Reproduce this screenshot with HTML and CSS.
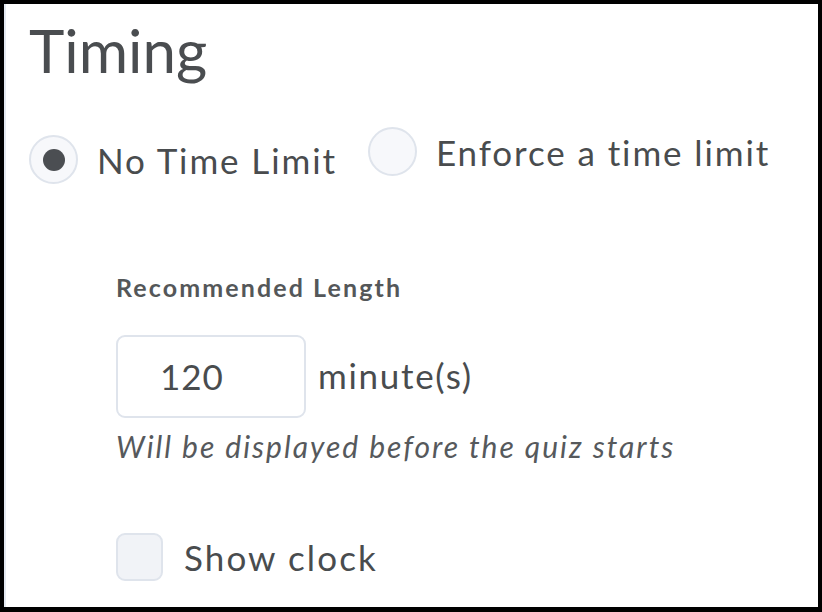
FILE: index.html
```html
<!DOCTYPE html>
<html lang="en">
<head>
<meta charset="utf-8">
<title>Timing</title>
<link rel="stylesheet" href="styles.css">
</head>
<body>
<div class="frame">
  <div class="panel">
    <h1 class="title">Timing</h1>
    <div class="radios">
      <label class="radio-item radio-item--low">
        <span class="radio radio--checked"><span class="dot"></span></span>
        <span class="radio-text">No Time Limit</span>
      </label>
      <label class="radio-item">
        <span class="radio"></span>
        <span class="radio-text">Enforce a time limit</span>
      </label>
    </div>
    <div class="section">
      <div class="field-label">Recommended Length</div>
      <div class="input-row">
        <div class="input">120</div>
        <span class="unit">minute(s)</span>
      </div>
      <div class="help">Will be displayed before the quiz starts</div>
      <label class="check-row">
        <span class="checkbox"></span>
        <span class="check-text">Show clock</span>
      </label>
    </div>
  </div>
</div>
</body>
</html>
```

FILE: styles.css
```css
html, body {
  margin: 0;
  padding: 0;
  background: #000;
  width: 822px;
  height: 612px;
  overflow: hidden;
}

.frame {
  box-sizing: border-box;
  width: 822px;
  height: 612px;
  padding: 4px 4px 5px 4px;
}

.panel {
  box-sizing: border-box;
  height: 100%;
  background: #fff;
  border-left: 2px solid #e4e9f1;
  padding: 10px 0 0 23px;
  font-family: Lato, "Open Sans", sans-serif;
  color: #494c4e;
}

.title {
  margin: 0;
  font-size: 60px;
  line-height: 72px;
  font-weight: 400;
  color: #4a4d50;
}

.radios {
  display: flex;
  align-items: flex-start;
  margin-top: 41px;
  gap: 31px;
}

.radio-item {
  display: flex;
  align-items: center;
  gap: 19px;
}

.radio-item--low {
  margin-top: 8px;
}

.radio {
  box-sizing: border-box;
  width: 49px;
  height: 49px;
  border-radius: 50%;
  border: 2px solid #dfe4ec;
  background: #f7f8fb;
  display: flex;
  align-items: center;
  justify-content: center;
}

.dot {
  width: 22px;
  height: 22px;
  border-radius: 50%;
  background: #4b4e52;
}

.radio-text {
  font-size: 35px;
  line-height: 44px;
  letter-spacing: 1.9px;
}

.section {
  padding-left: 87px;
  margin-top: 88px;
}

.field-label {
  font-size: 25px;
  line-height: 30px;
  font-weight: 700;
  color: #545759;
  letter-spacing: 2.1px;
}

.input-row {
  display: flex;
  align-items: center;
  gap: 12px;
  margin-top: 33px;
}

.input {
  box-sizing: border-box;
  width: 190px;
  height: 83px;
  border: 2px solid #dfe4ec;
  border-radius: 9px;
  padding-left: 42px;
  font-size: 35px;
  line-height: 79px;
  letter-spacing: 1px;
}

.unit {
  font-size: 35px;
  line-height: 44px;
  margin-top: -4px;
  letter-spacing: 1.7px;
}

.help {
  font-style: italic;
  font-size: 30px;
  line-height: 40px;
  margin-top: 8px;
  color: #56595c;
  letter-spacing: 2px;
}

.check-row {
  display: flex;
  align-items: center;
  gap: 21px;
  margin-top: 67px;
}

.checkbox {
  box-sizing: border-box;
  width: 47px;
  height: 48px;
  border: 2px solid #dfe4ec;
  border-radius: 9px;
  background: #f1f3f7;
}

.check-text {
  font-size: 35px;
  line-height: 44px;
  letter-spacing: 2.1px;
}
```
